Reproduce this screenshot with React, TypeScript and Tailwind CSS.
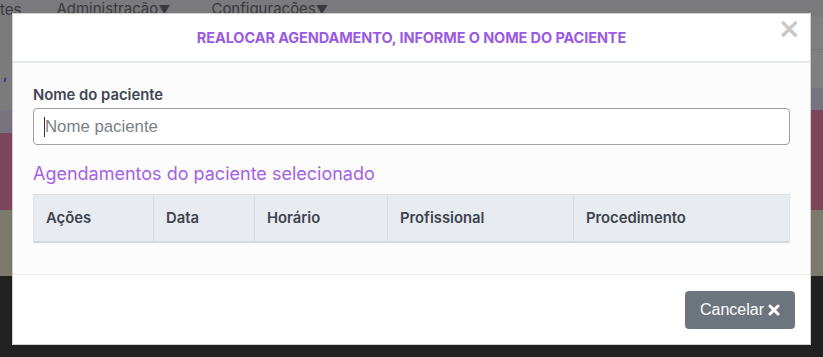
import React from 'react';

const font = { fontFamily: 'Inter, "Noto Sans", sans-serif' };

const columns = [
  { label: 'Ações', w: 'w-[119px]' },
  { label: 'Data', w: 'w-[101px]' },
  { label: 'Horário', w: 'w-[133px]' },
  { label: 'Profissional', w: 'w-[186px]' },
  { label: 'Procedimento', w: 'flex-1' },
];

const App: React.FC = () => {
  return (
    <div className="relative h-[357px] w-[823px] overflow-hidden bg-[#212121]" style={font}>
      {/* page behind the backdrop */}
      <div className="flex h-full w-full flex-col">
        <div className="flex h-[17px] items-end bg-[#7a797c] text-[15px] leading-[20px] text-[#3a3a3c]">
          <span className="mb-[-3px]">tes</span>
          <span className="mb-[-3px] ml-[35px]">Administração<span className="text-[12px]">▼</span></span>
          <span className="mb-[-3px] ml-[41px]">Configurações<span className="text-[12px]">▼</span></span>
        </div>
        <div className="flex flex-1">
          <div className="flex w-[12px] flex-col">
            <div className="relative h-[93px] bg-[#7b7b7b]">
              <span className="absolute left-[3px] top-[46px] text-[14px] font-bold text-[#4b2a8a]">,</span>
            </div>
            <div className="h-[23px] bg-[#777480]" />
            <div className="h-[77px] bg-[#7c4559]" />
            <div className="h-[66px] bg-[#7b7a6d]" />
            <div className="flex-1 bg-[#212121]" />
          </div>
          <div className="flex flex-1 flex-col">
            <div className="flex-1 bg-[#7b7a7d]" />
            <div className="h-[81px] bg-[#212121]" />
          </div>
          <div className="flex w-[12px] flex-col">
            <div className="h-[33px] border-b border-[#737373] bg-[#7f7f7f]" />
            <div className="h-[38px] bg-[#7f7f7f]" />
            <div className="h-[22px] bg-[#767480]" />
            <div className="h-[100px] bg-[#7c4559]" />
            <div className="h-[66px] bg-[#7b7a6d]" />
            <div className="flex-1 bg-[#212121]" />
          </div>
        </div>
      </div>

      {/* modal */}
      <div className="absolute left-[12px] top-[13px] flex h-[332px] w-[799px] flex-col border border-[#d0d0d0] bg-white">
        <div className="relative flex h-[49px] items-center justify-center border-b-2 border-[#e6eaed]">
          <h2 className="text-[14.5px] font-bold uppercase tracking-[-0.1px] text-[#9a5ae3]">
            Realocar agendamento, informe o nome do paciente
          </h2>
          <span
            className="absolute right-[9px] top-[1px] text-[28px] font-bold leading-[28px] text-[#c9c9c9]"
            style={{ fontFamily: '"DejaVu Sans", sans-serif' }}
          >
            ×
          </span>
        </div>

        <div className="flex h-[211px] flex-col bg-[#fcfcfc] px-[20px] pt-[22px]">
          <label className="text-[14.8px] font-semibold leading-[20px] text-[#3f4654]">Nome do paciente</label>
          <div className="mt-[3px] flex h-[37px] items-center rounded-[4px] border border-[#a0a0a0] bg-white pl-[10px]">
            <span className="h-[20px] w-px bg-[#333]" />
            <span
              className="text-[16.8px] text-[#7b7f86]"
              style={{ fontFamily: '"Liberation Sans", Arial, sans-serif' }}
            >
              Nome paciente
            </span>
          </div>
          <h3 className="mt-[17px] text-[18px] leading-[23px] text-[#a462e2]">Agendamentos do paciente selecionado</h3>
          <div className="mt-[9px] flex h-[49px] border-x border-t border-b-2 border-[#dde1e5] border-b-[#d5d9dd] bg-[#e8ebef]">
            {columns.map((c, i) => (
              <div
                key={c.label}
                className={`${c.w} flex items-center pl-[12px] text-[14.8px] font-semibold text-[#3d4450] ${i > 0 ? 'border-l border-[#d9dde1]' : ''}`}
              >
                {c.label}
              </div>
            ))}
          </div>
        </div>

        <div className="flex flex-1 items-center justify-end border-t border-[#e6eaed] bg-white px-[15px]">
          <button
            className="flex h-[38px] w-[110px] items-center justify-center gap-[4px] rounded-[4px] bg-[#6c757d] text-[16px] text-white"
            style={{ fontFamily: '"Liberation Sans", Arial, sans-serif' }}
          >
            Cancelar
            <svg width="12" height="12" viewBox="0 0 12 12">
              <path d="M2 2 L10 10 M10 2 L2 10" stroke="white" strokeWidth="3" strokeLinecap="round" />
            </svg>
          </button>
        </div>
      </div>
    </div>
  );
};

export default App;
